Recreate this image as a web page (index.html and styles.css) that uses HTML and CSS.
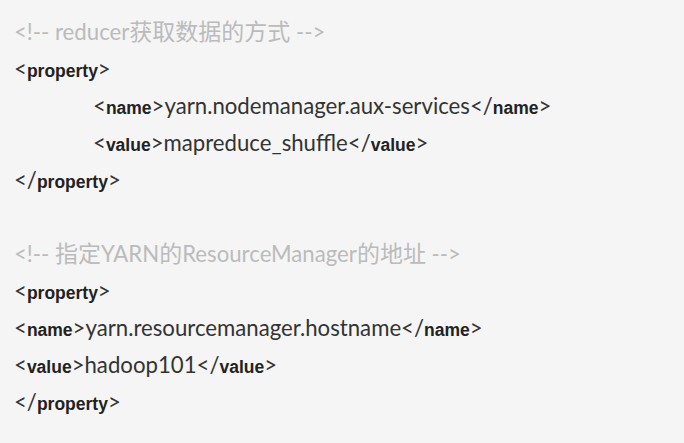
FILE: index.html
```html
<!DOCTYPE html>
<html>
<head>
<meta charset="utf-8">
<link rel="stylesheet" href="styles.css">
</head>
<body>
<div class="code">
  <p class="line comment">&lt;!-- reducer<span class="cjk">获取数据的方式</span> --&gt;</p>
  <p class="line">&lt;<b>property</b>&gt;</p>
  <p class="line indent">&lt;<b>name</b>&gt;yarn.nodemanager.aux-services&lt;/<b>name</b>&gt;</p>
  <p class="line indent">&lt;<b>value</b>&gt;mapreduce_shuffle&lt;/<b>value</b>&gt;</p>
  <p class="line">&lt;/<b>property</b>&gt;</p>
  <p class="line blank">&nbsp;</p>
  <p class="line comment">&lt;!-- <span class="cjk">指定</span>YARN<span class="cjk">的</span>ResourceManager<span class="cjk">的地址</span> --&gt;</p>
  <p class="line">&lt;<b>property</b>&gt;</p>
  <p class="line">&lt;<b>name</b>&gt;yarn.resourcemanager.hostname&lt;/<b>name</b>&gt;</p>
  <p class="line">&lt;<b>value</b>&gt;hadoop101&lt;/<b>value</b>&gt;</p>
  <p class="line">&lt;/<b>property</b>&gt;</p>
</div>
</body>
</html>
```
FILE: styles.css
```css
html, body {
  margin: 0;
  padding: 0;
  background: #f5f5f5;
}
.code {
  padding: 13px 14px 0 14px;
  font-family: Lato, "Noto Sans CJK SC", sans-serif;
  font-size: 22.2px;
  font-weight: 400;
  color: #333;
}
.line {
  margin: 0;
  line-height: 37px;
  height: 37px;
  white-space: nowrap;
}
.line b {
  font-family: "Liberation Sans", Arial, sans-serif;
  font-weight: bold;
  font-size: 17.5px;
  color: #222;
}
.indent {
  padding-left: 79px;
}
.comment {
  color: #bbbbbb;
}
.cjk {
  font-size: 23px;
}
```
